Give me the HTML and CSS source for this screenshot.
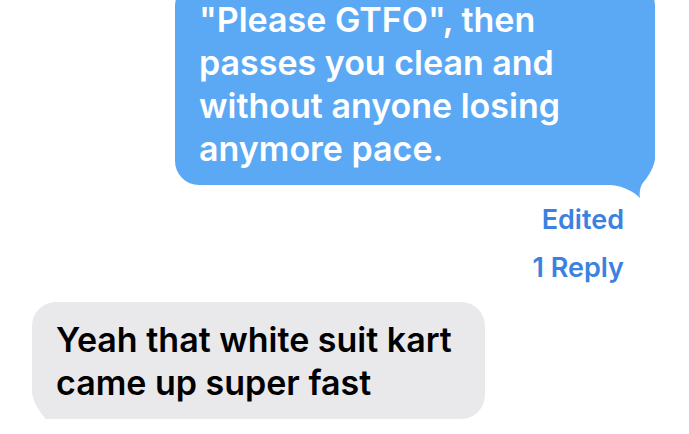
FILE: index.html
```html
<!DOCTYPE html>
<html lang="en">

<head>
    <meta charset="UTF-8">
    <meta name="viewport" content="width=device-width, initial-scale=1.0">
    <title>Messages</title>
    <link rel="stylesheet" href="styles.css">
</head>

<body>

    <div class="thread">
        <div class="bubble sent">
            <svg class="tail" width="50" height="50" viewBox="0 0 50 50">
                <path d="M0,35 C14,36 24,42 30,48 C29,44 30,38 32,34 C38,27 44,18 45,8 L45,0 L0,0 Z" />
            </svg>
            <p>"Please GTFO", then passes you clean and without anyone losing anymore pace.</p>
        </div>

        <div class="meta">
            <span>Edited</span>
            <span>1 Reply</span>
        </div>

        <div class="bubble received">
            <svg class="tail" width="50" height="50" viewBox="0 0 50 50">
                <path d="M0,35 C14,36 24,42 30,48 C29,44 30,38 32,34 C38,27 44,18 45,8 L45,0 L0,0 Z" />
            </svg>
            <p>Yeah that white suit kart came up super fast</p>
        </div>
    </div>

</body>

</html>
```

FILE: styles.css
```css
body {
    margin: 0;
    background: #fff;
    font-family: Inter, "Noto Sans", sans-serif;
    overflow: hidden;
}

.thread {
    display: flex;
    flex-direction: column;
    margin-top: -18px;
}

.bubble {
    position: relative;
    box-sizing: border-box;
    padding: 16px 24px 15px;
    border-radius: 24px;
}

.bubble p {
    position: relative;
    margin: 0;
    font-size: 34px;
    font-weight: 600;
    line-height: 43px;
}

.bubble .tail {
    position: absolute;
    bottom: -15px;
}

/* outgoing message, blue, tail bottom right */
.sent {
    align-self: flex-end;
    width: 480px;
    margin-right: 34px;
    background: #5ba9f4;
    color: #fff;
    border-bottom-right-radius: 30px;
}

.sent .tail {
    right: -5px;
    fill: #5ba9f4;
}

/* incoming message, gray, tail bottom left */
.received {
    align-self: flex-start;
    width: 453px;
    margin-left: 32px;
    margin-top: 14px;
    background: #e9e9eb;
    color: #000;
    border-bottom-left-radius: 30px;
}

.received .tail {
    left: -5px;
    fill: #e9e9eb;
    transform: scaleX(-1);
}

.meta {
    display: flex;
    flex-direction: column;
    align-items: flex-end;
    gap: 8px;
    margin: 15px 65px 0 0;
    color: #3b82e0;
    font-size: 27px;
    font-weight: 600;
    line-height: 40px;
}
```
